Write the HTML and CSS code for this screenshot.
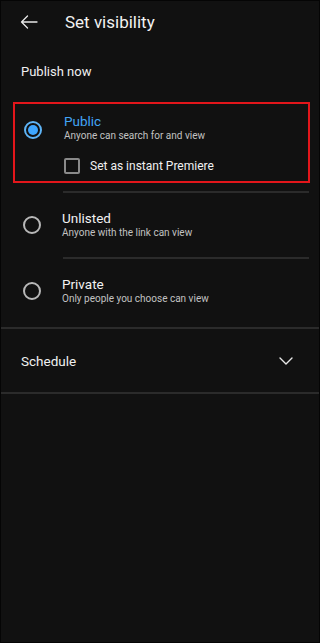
FILE: index.html
```html
<!DOCTYPE html>
<html lang="en">
<head>
    <meta charset="UTF-8">
    <meta name="viewport" content="width=device-width, initial-scale=1.0">
    <title>Set visibility</title>
    <link rel="stylesheet" href="styles.css">
</head>
<body>
    <div class="screen">
        <header class="topbar">
            <button class="back-btn" aria-label="Back">
                <svg width="18" height="14" viewBox="0 0 18 14" fill="none" stroke="#e8e8e8" stroke-width="1.3" stroke-linecap="round" stroke-linejoin="round">
                    <path d="M17 7H1.5M7.5 1L1.5 7l6 6"/>
                </svg>
            </button>
            <h1>Set visibility</h1>
        </header>

        <div class="section-label">Publish now</div>

        <div class="option option-selected">
            <span class="radio radio-on"></span>
            <div class="option-text">
                <div class="option-title">Public</div>
                <div class="option-sub">Anyone can search for and view</div>
                <label class="check-row">
                    <span class="checkbox"></span>
                    <span>Set as instant Premiere</span>
                </label>
            </div>
        </div>

        <div class="divider inset"></div>

        <div class="option">
            <span class="radio"></span>
            <div class="option-text">
                <div class="option-title">Unlisted</div>
                <div class="option-sub">Anyone with the link can view</div>
            </div>
        </div>

        <div class="divider inset"></div>

        <div class="option option-last">
            <span class="radio"></span>
            <div class="option-text">
                <div class="option-title">Private</div>
                <div class="option-sub">Only people you choose can view</div>
            </div>
        </div>

        <div class="divider"></div>

        <div class="schedule">
            <span>Schedule</span>
            <svg width="14" height="8" viewBox="0 0 14 8" fill="none" stroke="#e8e8e8" stroke-width="1.4" stroke-linecap="round" stroke-linejoin="round">
                <path d="M1 1l6 6 6-6"/>
            </svg>
        </div>

        <div class="divider"></div>
    </div>
</body>
</html>
```
FILE: styles.css
```css
* {
    margin: 0;
    padding: 0;
    box-sizing: border-box;
    font-family: Roboto, "Liberation Sans", sans-serif;
}

body {
    background-color: #000;
}

.screen {
    width: 320px;
    height: 643px;
    background-color: #111111;
    border: 1px solid #050505;
    color: #f0f0f0;
}

.topbar {
    display: flex;
    align-items: center;
    height: 40px;
    padding-top: 1px;
}

.back-btn {
    background: none;
    border: none;
    width: 64px;
    padding-left: 19px;
    display: flex;
    align-items: center;
}

.topbar h1 {
    font-size: 17px;
    font-weight: 400;
    color: #f2f2f2;
}

.section-label {
    font-size: 13px;
    line-height: 18px;
    padding: 22px 0 0 20px;
    margin-bottom: 21px;
}

.option {
    display: flex;
    padding: 17px 0 17px 0;
}

.option-last {
    padding-bottom: 21px;
}

.option-selected {
    margin: 0 9px 8px 12px;
    border: 2px solid #e3161b;
    padding: 9px 0 7px 0;
}

.radio {
    width: 18px;
    height: 18px;
    border: 2px solid #b8b8b8;
    border-radius: 50%;
    margin: 6px 21px 0 22px;
    flex-shrink: 0;
    display: flex;
    align-items: center;
    justify-content: center;
}

.option-selected .radio {
    margin: 8px 22px 0 9px;
}

.radio-on {
    border-color: #5fb4f5;
}

.radio-on::after {
    content: "";
    width: 10px;
    height: 10px;
    border-radius: 50%;
    background-color: #3ea6ff;
}

.option-title {
    font-size: 13.5px;
    line-height: 16px;
    color: #f2f2f2;
}

.option-selected .option-title {
    color: #42a5f5;
}

.option-sub {
    font-size: 10px;
    line-height: 14px;
    color: #c2c2c2;
}

.check-row {
    display: flex;
    align-items: center;
    gap: 10px;
    margin-top: 15px;
    font-size: 12px;
    color: #f0f0f0;
}

.checkbox {
    width: 16px;
    height: 16px;
    border: 2px solid #8a8a8a;
    border-radius: 2px;
}

.divider {
    height: 2px;
    background-color: #2b2b2b;
}

.divider.inset {
    margin: 0 10px 0 62px;
}

.schedule {
    display: flex;
    justify-content: space-between;
    align-items: center;
    height: 63px;
    padding: 0 26px 0 20px;
    font-size: 13.5px;
}
```
